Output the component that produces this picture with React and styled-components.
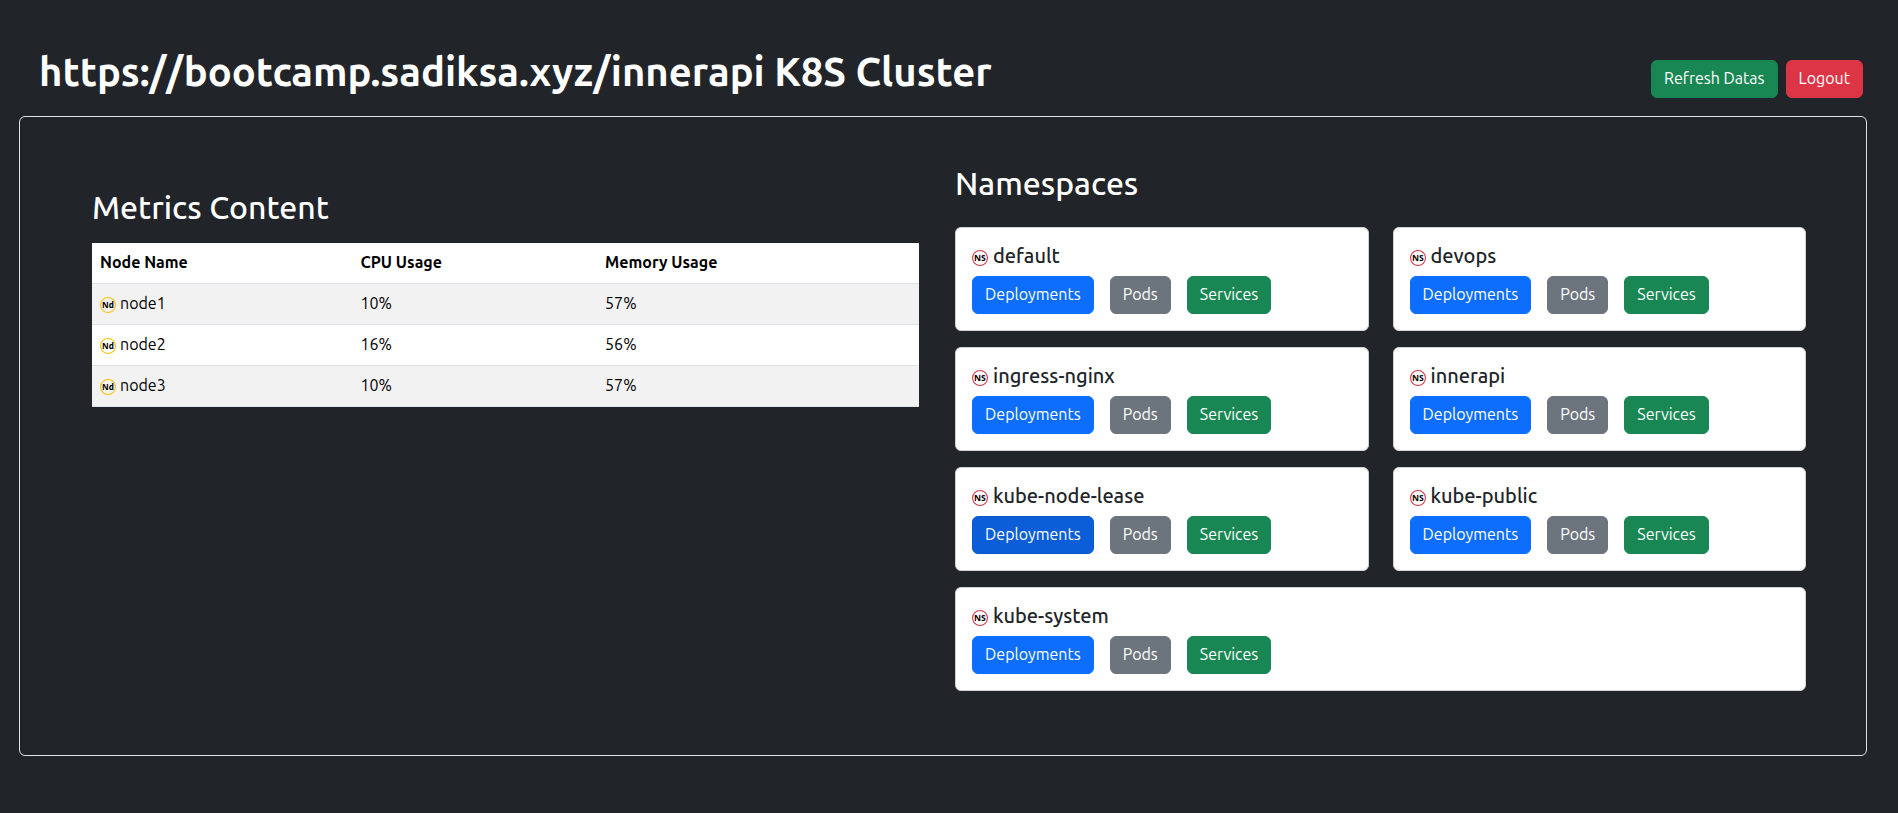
import React from 'react';
import styled, { createGlobalStyle } from 'styled-components';

const GlobalStyle = createGlobalStyle`
  *, *::before, *::after { box-sizing: border-box; }
  body {
    margin: 0;
    background: #212529;
    color: #fff;
    font-family: Ubuntu, "Noto Sans", sans-serif;
    font-size: 16px;
    line-height: 1.5;
  }
  h1, h2, h5 { margin: 0; line-height: 1.2; font-weight: 500; }
`;

const Page = styled.div`
  min-height: 813px;
  padding: 48px 31px 0 19px;
`;

const Header = styled.header`
  display: flex;
  justify-content: space-between;
  height: 68px;
  padding: 0 4px 0 20px;
`;

const PageTitle = styled.h1`
  font-size: 40px;
  line-height: 48px;
  font-weight: 700;
  white-space: nowrap;
`;

const HeaderActions = styled.div`
  display: flex;
  gap: 8px;
  padding-top: 12px;
`;

const tones = {
  primary: '#0d6efd',
  primaryActive: '#0b5ed7',
  secondary: '#6c757d',
  success: '#198754',
  danger: '#dc3545',
};

const borders = { ...tones, primaryActive: '#0a58ca' };

const Button = styled.button`
  height: 38px;
  padding: 5px 12px 7px;
  border: 1px solid ${(p) => borders[p.$tone]};
  border-radius: 6px;
  background: ${(p) => tones[p.$tone]};
  color: #fff;
  font: inherit;
  font-size: 16px;
  font-weight: 400;
  line-height: 24px;
  white-space: nowrap;
`;

const Panel = styled.main`
  display: flex;
  gap: 36px;
  height: 640px;
  padding: 0 60px 0 72px;
  border: 1px solid #dee2e6;
  border-radius: 6px;
`;

const Metrics = styled.section`
  width: 827px;
  padding-top: 71px;
`;

const Namespaces = styled.section`
  flex: 1;
  padding-top: 47px;
`;

const SectionTitle = styled.h2`
  height: 38px;
  margin-bottom: ${(p) => p.$gap}px;
  font-size: 32px;
  line-height: 38.4px;
`;

const Table = styled.table`
  width: 100%;
  table-layout: fixed;
  border-collapse: separate;
  border-spacing: 0;
  background: #fff;
  color: #000;
`;

const Column = styled.col`
  width: ${(p) => p.$width}px;
`;

const Cell = styled.td`
  height: 41px;
  padding: 7px 8px 9px;
  border-bottom: 1px solid #dee2e6;
  background: ${(p) => (p.$striped ? '#f2f2f2' : '#fff')};
  color: #000;
  line-height: 24px;
  text-align: left;
`;

const HeadCell = styled(Cell)`
  font-weight: 700;
`;

const Label = styled.span`
  display: flex;
  align-items: flex-start;
  gap: 0.25em;
`;

const Badge = styled.svg`
  flex: none;
  width: 16px;
  height: 16px;
  margin-top: 6px;
`;

const CardGrid = styled.div`
  display: grid;
  grid-template-columns: 1fr 1fr;
  gap: 16px 24px;
`;

const Card = styled.article`
  grid-column: ${(p) => (p.$wide ? '1 / -1' : 'auto')};
  height: 104px;
  padding: 16px;
  border: 1px solid #d0d1d2;
  border-radius: 6px;
  background: #fff;
  color: #212529;
`;

const CardTitle = styled.h5`
  height: 24px;
  margin-bottom: 8px;
  font-size: 20px;
  line-height: 24px;
`;

const CardActions = styled.div`
  display: flex;
  gap: 16px;
`;

function CircleBadge({ text, color }) {
  return (
    <Badge viewBox="0 0 16 16">
      <circle cx="8" cy="8" r="7.45" fill="none" stroke={color} strokeWidth="1.1" />
      <text
        x="8"
        y="10.8"
        textAnchor="middle"
        textLength="11.8"
        lengthAdjust="spacingAndGlyphs"
        fontFamily="Noto Sans, sans-serif"
        fontSize="8.6"
        fontWeight="700"
        fill="#000"
      >
        {text}
      </text>
    </Badge>
  );
}

const nodes = [
  { name: 'node1', cpu: '10%', memory: '57%' },
  { name: 'node2', cpu: '16%', memory: '56%' },
  { name: 'node3', cpu: '10%', memory: '57%' },
];

const namespaces = [
  { name: 'default' },
  { name: 'devops' },
  { name: 'ingress-nginx' },
  { name: 'innerapi' },
  { name: 'kube-node-lease', active: true },
  { name: 'kube-public' },
  { name: 'kube-system', wide: true },
];

export default function App() {
  return (
    <>
      <GlobalStyle />
      <Page>
        <Header>
          <PageTitle>https://bootcamp.sadiksa.xyz/innerapi K8S Cluster</PageTitle>
          <HeaderActions>
            <Button $tone="success">Refresh Datas</Button>
            <Button $tone="danger">Logout</Button>
          </HeaderActions>
        </Header>
        <Panel>
          <Metrics>
            <SectionTitle $gap={17}>Metrics Content</SectionTitle>
            <Table>
              <colgroup>
                <Column $width={260.5} />
                <Column $width={244.6} />
                <Column />
              </colgroup>
              <thead>
                <tr>
                  <HeadCell as="th">Node Name</HeadCell>
                  <HeadCell as="th">CPU Usage</HeadCell>
                  <HeadCell as="th">Memory Usage</HeadCell>
                </tr>
              </thead>
              <tbody>
                {nodes.map((n, i) => (
                  <tr key={n.name}>
                    <Cell $striped={i % 2 === 0}>
                      <Label>
                        <CircleBadge text="Nd" color="#ffc107" />
                        {n.name}
                      </Label>
                    </Cell>
                    <Cell $striped={i % 2 === 0}>{n.cpu}</Cell>
                    <Cell $striped={i % 2 === 0}>{n.memory}</Cell>
                  </tr>
                ))}
              </tbody>
            </Table>
          </Metrics>
          <Namespaces>
            <SectionTitle $gap={25}>Namespaces</SectionTitle>
            <CardGrid>
              {namespaces.map((ns) => (
                <Card key={ns.name} $wide={ns.wide}>
                  <CardTitle>
                    <Label>
                      <CircleBadge text="NS" color="#dc3545" />
                      {ns.name}
                    </Label>
                  </CardTitle>
                  <CardActions>
                    <Button $tone={ns.active ? 'primaryActive' : 'primary'}>Deployments</Button>
                    <Button $tone="secondary">Pods</Button>
                    <Button $tone="success">Services</Button>
                  </CardActions>
                </Card>
              ))}
            </CardGrid>
          </Namespaces>
        </Panel>
      </Page>
    </>
  );
}
